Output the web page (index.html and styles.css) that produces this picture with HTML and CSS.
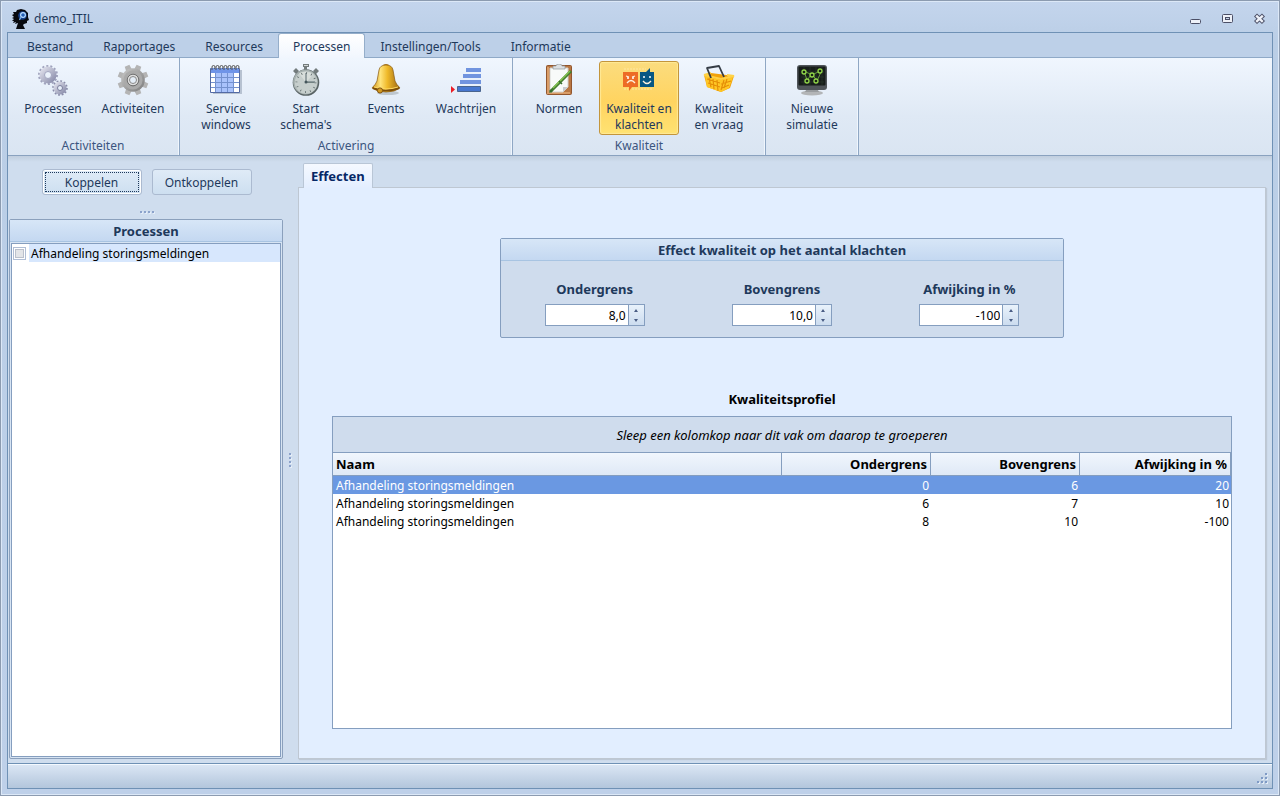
FILE: index.html
```html
<!DOCTYPE html>
<html lang="nl">
<head>
<meta charset="utf-8">
<title>demo_ITIL</title>
<link rel="stylesheet" href="styles.css">
</head>
<body>
<div class="window">
  <header class="titlebar">
    <svg class="app-icon" width="18" height="20" viewBox="0 0 18 20"><path d="M5 1 9 0l4 1 3 3v4l1 3-2 1v2l-3 1-1 1 2 4H4l1-3 1-3-3 1 1-2-3 1 1-2-2 0 2-2-2-1 2-1-2-2 2-1-1-2 3 0z" fill="#07090e"/><circle cx="10.500" cy="6.500" r="4.300" fill="#153f87"/><circle cx="11" cy="6" r="2.400" fill="#245fb5" stroke="#b9dcff" stroke-width="1.200"/><path d="m9 8-1.500 3" stroke="#74adea" stroke-width="1.300"/></svg>
    <h1 class="title">demo_ITIL</h1>
    <div class="window-controls">
      <button class="window-button" aria-label="Minimaliseren"><svg width="12" height="12"><rect x=".5" y="6.500" width="10" height="4" rx="1" fill="#eef1f8" stroke="#4b4f66"/></svg></button>
      <button class="window-button" aria-label="Maximaliseren"><svg width="12" height="12"><rect x=".5" y="1.500" width="10" height="8" rx="1" fill="#eef1f8" stroke="#4b4f66"/><rect x="3.500" y="4.500" width="4" height="2" fill="#c5d2e6" stroke="#4b4f66"/></svg></button>
      <button class="window-button" aria-label="Sluiten"><svg width="12" height="12"><path d="m1.500 2 8 7.500m0-7.500-8 7.500" stroke="#4b4f66" stroke-width="4.400"/><path d="m2.200 2.700 6.600 6.100m0-6.100-6.600 6.100" stroke="#eef1f8" stroke-width="2.400"/></svg></button>
    </div>
  </header>

  <div class="frame">
    <nav class="menu">
      <button class="menu-tab">Bestand</button>
      <button class="menu-tab">Rapportages</button>
      <button class="menu-tab">Resources</button>
      <button class="menu-tab active">Processen</button>
      <button class="menu-tab">Instellingen/Tools</button>
      <button class="menu-tab">Informatie</button>
    </nav>

    <div class="ribbon">
      <section class="ribbon-group">
        <div class="ribbon-items">
          <button class="ribbon-button">
            <svg width="32" height="32" viewBox="0 0 32 32"><defs><linearGradient id="steel" x1="0" y1="0" x2="1" y2="1"><stop stop-color="#dcdde9"/><stop offset="1" stop-color="#8e91ae"/></linearGradient></defs><circle cx="11" cy="11" r="8.800" fill="none" stroke="#a0a3bd" stroke-width="2.400" stroke-dasharray="2 1.949"/><circle cx="11" cy="11" r="6" fill="none" stroke="url(#steel)" stroke-width="5"/><circle cx="11" cy="11" r="3.500" fill="none" stroke="#a2a5bf"/><circle cx="23" cy="24" r="6.800" fill="none" stroke="#898ca9" stroke-width="2" stroke-dasharray="1.800 1.761"/><circle cx="23" cy="24" r="4.500" fill="none" stroke="url(#steel)" stroke-width="4"/><circle cx="23" cy="24" r="2.500" fill="none" stroke="#7b7e9c"/></svg>
            <span>Processen</span>
          </button>
          <button class="ribbon-button">
            <svg width="32" height="32" viewBox="0 0 32 32"><defs><linearGradient id="iron" x1="0" y1="0" x2="1" y2="1"><stop stop-color="#c9c9c9"/><stop offset="1" stop-color="#7c7c7c"/></linearGradient></defs><g fill="#b4b4b4"><path id="tooth" d="m13 6 0.500-5.500h5l.5 5.500z" transform="rotate(22.500 16 16)"/><use href="#tooth" transform="rotate(45 16 16)"/><use href="#tooth" transform="rotate(90 16 16)"/><use href="#tooth" transform="rotate(135 16 16)"/><use href="#tooth" transform="rotate(180 16 16)"/><use href="#tooth" transform="rotate(225 16 16)"/><use href="#tooth" transform="rotate(270 16 16)"/><use href="#tooth" transform="rotate(315 16 16)"/></g><circle cx="16" cy="16" r="11.800" fill="url(#iron)"/><circle cx="16" cy="16" r="8" fill="none" stroke="#aaa" stroke-width="3"/><circle cx="16" cy="16" r="4.500" fill="#e4edf7" stroke="#dedede" stroke-width="2"/><circle cx="16" cy="16" r="5.800" fill="none" stroke="#727272"/><circle cx="16" cy="16" r="3.500" fill="none" stroke="#898989"/></svg>
            <span>Activiteiten</span>
          </button>
        </div>
        <h2 class="ribbon-label">Activiteiten</h2>
      </section>

      <section class="ribbon-group">
        <div class="ribbon-items">
          <button class="ribbon-button">
            <svg width="32" height="32" viewBox="0 0 32 32"><path d="M3 6h29v24H3z" fill="#b7c2d1"/><path d="M.5 4.500h29v24H.5z" fill="#fff" stroke="#536aa4"/><path d="M6 9h18v19H6z" fill="#a9c2fb"/><path d="M1 4h28v5H1z" fill="#6f94e8"/><path d="M5.500 9v19M11.500 9v19M17.500 9v19M23.500 9v19M1 13.500h28M1 18.500h28M1 23.500h28" stroke="#7491ce"/><path d="M1 28.500h28" stroke="#536aa4"/><g fill="none" stroke="#555"><path id="ring" d="M2 6V3q0-1.500 1.500-1.500T5 3t-1 2"/><use href="#ring" x="4"/><use href="#ring" x="8"/><use href="#ring" x="12"/><use href="#ring" x="16"/><use href="#ring" x="20"/><use href="#ring" x="24"/></g></svg>
            <span>Service windows</span>
          </button>
          <button class="ribbon-button">
            <svg width="32" height="32" viewBox="0 0 32 32"><path d="M13 0h6v3h-2v3h-3V3h-1zM3 7l3-3 3 3-3 3zM23 7l3-3 3 3-3 3z" fill="#737b7c"/><path d="M14 1h4v1h-4z" fill="#d3d7d7"/><circle cx="16" cy="18.500" r="13.300" fill="#596364"/><circle cx="15.500" cy="18" r="12.400" fill="#a6b0af"/><circle cx="16" cy="18.500" r="11.200" fill="#c6cecc"/><path d="M16 18.500 9 9.500a12 12 0 0 1 14 1z" fill="#d8dedb"/><circle cx="16" cy="18.500" r="9.500" fill="none" stroke="#5f6b6c" stroke-width="2" stroke-dasharray=".8 4.174"/><path d="M16 19V9m0 9h9" stroke="#56676c"/><path d="M17 18h7v1h-7z" fill="#718080"/><circle cx="16" cy="18" r="1.500" fill="#45565b"/></svg>
            <span>Start schema's</span>
          </button>
          <button class="ribbon-button">
            <svg width="32" height="32" viewBox="0 0 32 32"><defs><linearGradient id="brass"><stop stop-color="#cc8c12"/><stop offset=".3" stop-color="#ffe47b"/><stop offset=".55" stop-color="#efb929"/><stop offset="1" stop-color="#9b6513"/></linearGradient></defs><ellipse cx="18" cy="29" rx="11" ry="2" fill="#bec7cf"/><path d="M13 5V2q0-2 3-2t3 2v3z" fill="#b17b20"/><path d="M16 1q6 0 7 5l2 11q1 3 5 7-5 4-14 4T2 24q4-4 5-7l2-11q1-5 7-5z" fill="url(#brass)" stroke="#875910" stroke-width=".7"/><path d="M3 24q12 5 26 0" fill="none" stroke="#7d4e09" stroke-width="2"/><path d="M4 23q12 4 24 0" fill="none" stroke="#ffda61"/><circle cx="10" cy="26.500" r="2.600" fill="#d49b20" stroke="#825411"/></svg>
            <span>Events</span>
          </button>
          <button class="ribbon-button">
            <svg width="32" height="32" viewBox="0 0 32 32"><path d="M16 4h15v4H16zM13 10h18v4H13zM10 16h21v4H10z" fill="#7194df"/><path d="M7.500 22.500h23v5h-23z" fill="#4777cf" stroke="#4a658e"/><path d="m1 22 4 3.500L1 29z" fill="#ed1c24"/></svg>
            <span>Wachtrijen</span>
          </button>
        </div>
        <h2 class="ribbon-label">Activering</h2>
      </section>

      <section class="ribbon-group">
        <div class="ribbon-items">
          <button class="ribbon-button">
            <svg width="32" height="32" viewBox="0 0 32 32"><rect x="3.500" y="1.500" width="25" height="29" rx="1" fill="#b97743" stroke="#92562e"/><path d="M5 3v26h22" fill="none" stroke="#da9d68" stroke-width="2"/><path d="M7 4h18v19l-5 5H7z" fill="#f8faf9" stroke="#d4d3cf"/><path d="M20 28v-5h5z" fill="#c8cbd0"/><path d="M10 2h3q0-2 3-2t3 2h3v3H10z" fill="#dce0e3" stroke="#8f969c" stroke-width=".7"/><path d="M28 7 7 28" stroke="#447d30" stroke-width="3"/><path d="M27 7 10 24" stroke="#83c351" stroke-width="1.500"/><path d="m6 29 2-4 2 2z" fill="#356a2f"/><path d="m16 17 3 3" stroke="#376d2d" stroke-width="1.500"/></svg>
            <span>Normen</span>
          </button>
          <button class="ribbon-button selected" aria-pressed="true">
            <svg width="32" height="32" viewBox="0 0 32 32"><path d="M0 8h15v15H9l-3 4v-4H0z" fill="#ed6b26"/><path d="M17 8h6l4-4v4h4v15H17z" fill="#085784"/><path d="M1 25h4m4 0h21M1 5h22" stroke="#ffe6a0" stroke-dasharray="2 1"/><g fill="none" stroke="#fff1dd" stroke-width="1.300"><path d="M4 19q4-5 8 0M3 12l3 1m6-1-3 1"/><path d="M20 17q4 5 8 0"/></g><g fill="#fff"><circle cx="5" cy="14" r="1"/><circle cx="10" cy="14" r="1"/><circle cx="21" cy="13" r="1"/><circle cx="27" cy="13" r="1"/></g></svg>
            <span>Kwaliteit en klachten</span>
          </button>
          <button class="ribbon-button">
            <svg width="32" height="32" viewBox="0 0 32 32"><path d="m1 11 7-2 23 3-4 12-9 4-14-5z" fill="#f2a20b"/><path d="m2 12 16 4 12-3-4 11-8 4-14-5z" fill="#ffc726"/><path d="m4 15 13 4m-12 0 12 4M6 14l2 9m2-8 1 10m3-9 1 11m6-11-3 10m6-11-3 9M18 20l10-3m-9 7 7-3" stroke="#e58f07" stroke-width="1.200"/><path d="m1 11 7-2m-7 2 17 4 13-3-7-1" fill="none" stroke="#ffd247" stroke-width="2"/><path d="m8 14-4-10 12-2 5 11" fill="none" stroke="#353c45" stroke-width="1.800" stroke-linejoin="round"/></svg>
            <span>Kwaliteit<br>en vraag</span>
          </button>
        </div>
        <h2 class="ribbon-label">Kwaliteit</h2>
      </section>

      <section class="ribbon-group">
        <div class="ribbon-items">
          <button class="ribbon-button">
            <svg width="32" height="32" viewBox="0 0 32 32"><ellipse cx="16" cy="29" rx="11" ry="2.500" fill="#b3b5b7"/><path d="M11 24h10l2 4H9z" fill="#999c9f"/><rect x="1" y="1" width="30" height="25" rx="3" fill="#50555a"/><rect x="2.500" y="2.500" width="27" height="19" rx="1" fill="#171d1a"/><path d="M5 8h23M5 13h23M5 18h23M8 3v18m6-18v18m6-18v18m6-18v18" stroke="#29382b" stroke-width=".7"/><path d="m8 7 3 9 5-6 5 7 4-9M8 7l8 4 8-4" fill="none" stroke="#699f3c"/><g fill="#192516" stroke="#91d64a" stroke-width="1.300"><circle cx="8" cy="8" r="2"/><circle cx="16" cy="11" r="2"/><circle cx="24" cy="7" r="2"/><circle cx="11" cy="17" r="2"/><circle cx="20" cy="17" r="2"/></g></svg>
            <span>Nieuwe simulatie</span>
          </button>
        </div>
      </section>
    </div>

    <main class="workspace">
      <aside class="sidebar">
        <div class="link-actions">
          <button class="push focused">Koppelen</button>
          <button class="push">Ontkoppelen</button>
        </div>
        <div class="splitter-h"><i></i><i></i><i></i><i></i></div>
        <section class="process-panel">
          <h2 class="panel-title">Processen</h2>
          <div class="process-list">
            <label class="process-item"><input class="check" type="checkbox"><span class="process-name">Afhandeling storingsmeldingen</span></label>
          </div>
        </section>
      </aside>
      <div class="splitter-v"><i></i><i></i><i></i><i></i></div>
      <div class="detail">
        <div class="page-tabs"><button class="page-tab">Effecten</button></div>
        <div class="page">
          <section class="effect-box">
            <h2 class="panel-title">Effect kwaliteit op het aantal klachten</h2>
            <div class="fields">
              <div class="field"><label for="lower">Ondergrens</label>
                <div class="spin"><input id="lower" type="text" value="8,0"><div class="spin-buttons"><button class="up" aria-label="Ondergrens omhoog"></button><button class="down" aria-label="Ondergrens omlaag"></button></div></div></div>
              <div class="field"><label for="upper">Bovengrens</label>
                <div class="spin"><input id="upper" type="text" value="10,0"><div class="spin-buttons"><button class="up" aria-label="Bovengrens omhoog"></button><button class="down" aria-label="Bovengrens omlaag"></button></div></div></div>
              <div class="field"><label for="deviation">Afwijking in %</label>
                <div class="spin"><input id="deviation" type="text" value="-100"><div class="spin-buttons"><button class="up" aria-label="Afwijking omhoog"></button><button class="down" aria-label="Afwijking omlaag"></button></div></div></div>
            </div>
          </section>
          <h2 class="profile-title">Kwaliteitsprofiel</h2>
          <div class="grid">
            <p class="group-hint">Sleep een kolomkop naar dit vak om daarop te groeperen</p>
            <table class="profile">
              <thead><tr><th class="name">Naam</th><th class="number">Ondergrens</th><th class="number">Bovengrens</th><th class="number last">Afwijking in %</th></tr></thead>
              <tbody>
                <tr class="current"><td>Afhandeling storingsmeldingen</td><td>0</td><td>6</td><td>20</td></tr>
                <tr><td>Afhandeling storingsmeldingen</td><td>6</td><td>7</td><td>10</td></tr>
                <tr><td>Afhandeling storingsmeldingen</td><td>8</td><td>10</td><td>-100</td></tr>
              </tbody>
            </table>
          </div>
        </div>
      </div>
    </main>

    <footer class="status">
      <svg width="12" height="12"><g fill="#e3edf8"><path d="M9 1h2v2H9zM5 5h2v2H5zM9 5h2v2H9zM1 9h2v2H1zM5 9h2v2H5zM9 9h2v2H9z"/></g><g fill="#7e9ac5"><path d="M8 0h2v2H8zM4 4h2v2H4zM8 4h2v2H8zM0 8h2v2H0zM4 8h2v2H4zM8 8h2v2H8z"/></g></svg>
    </footer>
  </div>
</div>
</body>
</html>
```

FILE: styles.css
```css
* { box-sizing: border-box; }

body {
  margin: 0;
  color: #1e395b;
  font: 12px/16px "Noto Sans", Tahoma, sans-serif;
}

button, input { font: inherit; color: inherit; }
button { margin: 0; padding: 0; border: 0; background: none; }
h1, h2, p { margin: 0; font-size: inherit; }

.window {
  display: flex;
  flex-direction: column;
  min-height: 100vh;
  padding: 0 6px 6px;
  border: 1px solid #8c9bb0;
  box-shadow: inset 0 0 0 1px #dce8f7;
  background: linear-gradient(#c4d5ed, #bacee6 40px, #bed0e9);
}

.titlebar { display: flex; align-items: center; height: 31px; padding: 5px 7px 0 5px; gap: 4px; }
.title { flex: 1; font-weight: normal; }
.window-controls { display: flex; gap: 20px; }
.window-button { height: 12px; }
.window-button svg { display: block; }

.frame { flex: 1; display: flex; flex-direction: column; border: 1px solid #6f91b5; }

.menu {
  display: flex;
  height: 25px;
  padding-left: 4px;
  background: #bdd0e8;
  box-shadow: inset 0 -1px #8fa9c7;
}
.menu-tab { padding: 2px 14px 0; border: 1px solid transparent; }
.menu-tab.active {
  border-color: #95aeca;
  border-bottom: 0;
  border-radius: 3px 3px 0 0;
  background: linear-gradient(#fff, #f1f6fe);
}

.ribbon {
  display: flex;
  height: 98px;
  border-bottom: 1px solid #8aa2bf;
  background: linear-gradient(#f0f6fe, #dfe9f5 60%, #dae5f2);
}
.ribbon-group {
  display: flex;
  flex-direction: column;
  justify-content: space-between;
  padding: 3px 6px 1px;
  border-right: 1px solid #8fa7c4;
  box-shadow: inset -1px 0 #f0f6fd;
}
.ribbon-group:first-child { padding-left: 5px; }
.ribbon-items { display: flex; }
.ribbon-button {
  display: flex;
  flex-direction: column;
  align-items: center;
  width: 80px;
  height: 74px;
  padding: 2px 1px 0;
  gap: 5px;
  border: 1px solid transparent;
  border-radius: 3px;
}
.ribbon-button.selected {
  border-color: #c3953b;
  background: linear-gradient(#fbdc7e, #ffd460 55%, #ffe272);
  box-shadow: inset 0 0 1px 1px #ffe996;
}
.ribbon-label { color: #3b557f; font-weight: normal; text-align: center; }

.workspace { flex: 1; display: flex; background: linear-gradient(#c1cede, #cfddee 6px); }

.sidebar { display: flex; flex-direction: column; width: 276px; padding: 13px 1px 4px; }
.link-actions { display: flex; justify-content: center; gap: 10px; padding-left: 1px; }
.push {
  width: 100px;
  height: 26px;
  padding-top: 2px;
  border: 1px solid #abbad0;
  border-radius: 3px;
  background: linear-gradient(#dfebf7, #cddff0);
}
.push.focused { box-shadow: inset 0 0 0 1px #fff; outline: 1px dotted #1e395b; outline-offset: -4px; }

.splitter-h, .splitter-v { display: flex; justify-content: center; align-items: center; gap: 2px; }
.splitter-h { height: 24px; padding: 10px 0 0 2px; }
.splitter-v { flex-direction: column; width: 14px; padding-right: 2px; }
.splitter-h i, .splitter-v i { width: 2px; height: 2px; background: #8ba2cb; box-shadow: 1px 1px #e4edf8; }

.process-panel {
  flex: 1;
  display: flex;
  flex-direction: column;
  padding-bottom: 1px;
  border: 1px solid #8ba0bc;
  border-radius: 2px;
  background: #d7e4f3;
}
.panel-title {
  height: 22px;
  font-size: 13px;
  line-height: 22px;
  font-weight: bold;
  text-align: center;
  border-bottom: 1px solid #a8c4e2;
  background: linear-gradient(#d7e6f7, #c4d8f1);
}
.process-list { flex: 1; margin: 1px 1px 0; border: 1px solid #859ebf; background: #fff; }
.process-item { display: flex; align-items: center; height: 18px; padding-left: 1px; gap: 3px; }
.process-name { flex: 1; height: 18px; line-height: 20px; padding-left: 2px; color: #000; background: #d7e7fd; }
.check {
  appearance: none;
  width: 13px;
  height: 13px;
  margin: 0;
  border: 1px solid #b0bed5;
  background: #e3e5e8;
  box-shadow: inset 0 0 0 1px #fff, inset 0 0 0 2px #bbc1cc;
}

.detail { flex: 1; display: flex; flex-direction: column; padding: 7px 6px 4px 0; }
.page-tabs { display: flex; height: 24px; padding-left: 5px; }
.page-tab {
  z-index: 1;
  height: 25px;
  padding: 0 7px;
  color: #052766;
  font-size: 13px;
  font-weight: bold;
  border: 1px solid #b9c6d6;
  border-bottom: 0;
  border-radius: 2px 2px 0 0;
  background: linear-gradient(#f5f9ff, #e3eeff);
}
.page {
  flex: 1;
  display: flex;
  flex-direction: column;
  padding: 50px 33px 29px;
  border: 1px solid #bec7d2;
  box-shadow: 1px 1px 1px #bdc8d6;
  background: #e2eeff;
}

.effect-box {
  align-self: center;
  width: 100%;
  max-width: 564px;
  border: 1px solid #859ebf;
  border-radius: 2px;
  background: #cfdced;
}
.fields { display: grid; grid-template-columns: repeat(3, 1fr); padding: 20px 0 11px; }
.field { display: flex; flex-direction: column; align-items: center; gap: 7px; font-size: 13px; font-weight: bold; }
.spin {
  display: flex;
  width: 100px;
  height: 22px;
  border: 1px solid #859ebf;
  background: #fff;
  font-size: 12px;
  font-weight: normal;
}
.spin input { flex: 1; min-width: 0; padding: 1px 2px 0; border: 0; color: #000; text-align: right; background: #fff; }
.spin-buttons {
  display: flex;
  flex-direction: column;
  width: 16px;
  border-left: 1px solid #859ebf;
  background: linear-gradient(#e9f2fb, #ccdcef);
}
.spin-buttons button { flex: 1; display: grid; place-content: center; }
.spin-buttons button::before { content: ""; border: 2px solid transparent; }
.spin-buttons .up::before { border-top: 0; border-bottom: 3px solid #4a5d85; }
.spin-buttons .down::before { border-bottom: 0; border-top: 3px solid #4a5d85; }

.profile-title { margin: 53px 0 9px; color: #000; font-size: 13px; text-align: center; }
.grid { flex: 1; border: 1px solid #859ebf; color: #000; background: #fff; }
.group-hint { height: 35px; font-size: 13px; line-height: 37px; text-align: center; font-style: italic; background: #cfdced; }
.profile { width: 100%; table-layout: fixed; border-collapse: separate; border-spacing: 0; }
.profile th {
  height: 24px;
  padding: 0 3px 1px;
  font-size: 13px;
  text-align: right;
  border: 1px solid #859ebf;
  border-width: 1px 1px 1px 0;
  background: linear-gradient(#f1f6fd, #dfe9f6);
}
.profile th.name { text-align: left; }
.profile th.number { width: 149px; }
.profile th.last { width: 151px; }
.profile td { height: 18px; padding: 2px 2px 0 3px; text-align: right; }
.profile td:first-child { text-align: left; }
.profile .current { color: #fff; background: #6a98e2; }

.status {
  display: flex;
  justify-content: flex-end;
  align-items: flex-end;
  height: 25px;
  padding: 0 3px 3px;
  border-top: 1px solid #6f91b5;
  box-shadow: inset 0 1px #f4f9ff;
  background: linear-gradient(#dce7f5, #b3c6dc);
}
```
